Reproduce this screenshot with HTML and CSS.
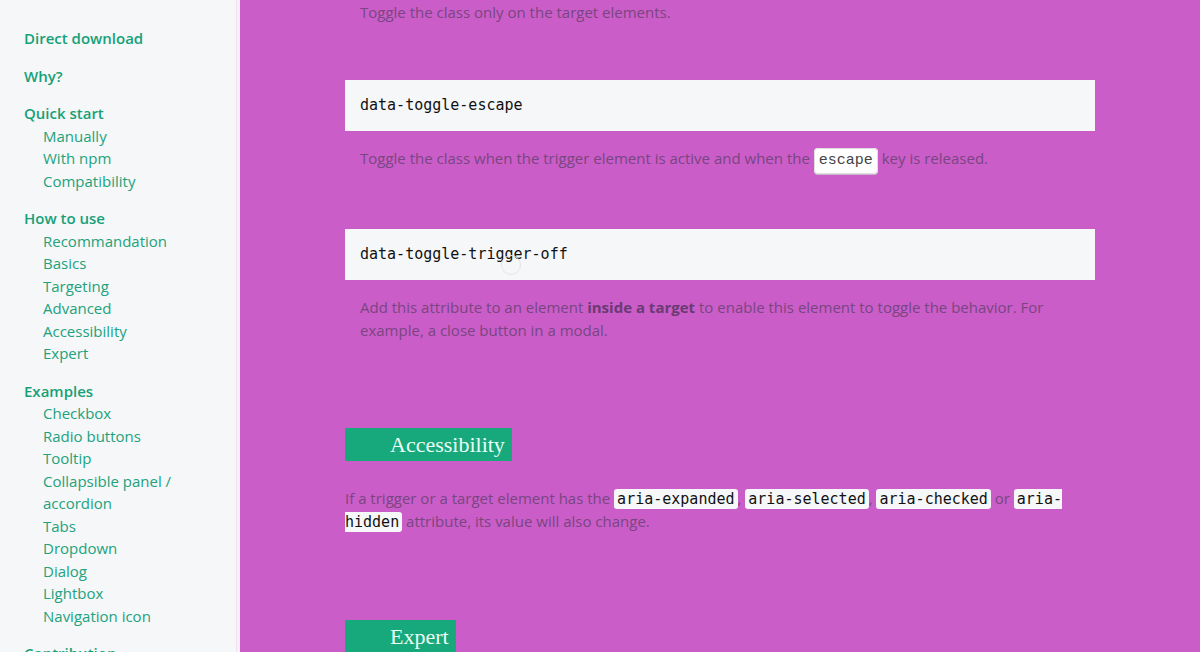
FILE: index.html
```html
<!DOCTYPE html>
<html lang="en">
<head>
<meta charset="utf-8">
<title>toggle docs</title>
<link rel="stylesheet" href="styles.css">
</head>
<body>
<div class="page">
  <aside class="sidebar">
    <nav class="nav">
      <div class="group"><a class="group-title">Direct download</a></div>
      <div class="group"><a class="group-title">Why?</a></div>
      <div class="group">
        <a class="group-title">Quick start</a>
        <ul class="sub">
          <li>Manually</li>
          <li>With npm</li>
          <li>Compatibility</li>
        </ul>
      </div>
      <div class="group">
        <a class="group-title">How to use</a>
        <ul class="sub">
          <li>Recommandation</li>
          <li>Basics</li>
          <li>Targeting</li>
          <li>Advanced</li>
          <li>Accessibility</li>
          <li>Expert</li>
        </ul>
      </div>
      <div class="group">
        <a class="group-title">Examples</a>
        <ul class="sub">
          <li>Checkbox</li>
          <li>Radio buttons</li>
          <li>Tooltip</li>
          <li>Collapsible panel / accordion</li>
          <li>Tabs</li>
          <li>Dropdown</li>
          <li>Dialog</li>
          <li>Lightbox</li>
          <li>Navigation icon</li>
        </ul>
      </div>
      <div class="group"><a class="group-title">Contribution</a></div>
    </nav>
  </aside>
  <main class="main">
    <div class="content">
      <p class="desc first">Toggle the class only on the target elements.</p>

      <div class="attr attr-1">data-toggle-escape</div>
      <p class="desc">Toggle the class when the trigger element is active and when the <kbd class="key">escape</kbd> key is released.</p>

      <div class="attr attr-2">data-toggle-trigger-off<span class="cursor"></span></div>
      <p class="desc">Add this attribute to an element <strong>inside a target</strong> to enable this element to toggle the behavior. For example, a close button in a modal.</p>

      <h2 class="section-title">Accessibility</h2>
      <p class="text">If a trigger or a target element has the <code>aria-expanded</code>, <code>aria-selected</code>, <code>aria-checked</code> or <code>aria-hidden</code> attribute, its value will also change.</p>

      <h2 class="section-title">Expert</h2>
    </div>
  </main>
</div>
</body>
</html>
```

FILE: styles.css
```css
* { box-sizing: border-box; }
html, body {
  margin: 0;
  padding: 0;
  height: 100%;
  overflow: hidden;
}
body {
  font-family: "Open Sans", "Liberation Sans", sans-serif;
  background: #cb5dc9;
}
.page {
  display: flex;
  height: 652px;
  overflow: hidden;
}
.sidebar {
  width: 240px;
  flex: 0 0 240px;
  background: #f5f7f9;
  border-right: 3px solid #fbeefb;
  box-shadow: inset -1px 0 0 #efe3ef;
  padding: 27px 24px 0 24px;
  overflow: hidden;
}
.nav { display: flex; flex-direction: column; gap: 15px; }
.group-title {
  display: block;
  font-size: 15px;
  font-weight: 600;
  line-height: 22.5px;
  color: #15a177;
}
.sub {
  list-style: none;
  margin: 0;
  padding: 0 0 0 19px;
}
.sub li {
  font-size: 15px;
  line-height: 22.5px;
  color: #22a27c;
}
.main {
  flex: 1;
  position: relative;
  overflow: hidden;
}
.content {
  width: 750px;
  margin: 0 auto;
  padding-top: 1px;
}
.desc, .text {
  margin: 0;
  font-size: 15px;
  line-height: 22.5px;
  color: #784680;
}
.desc { padding: 0 15px; margin-top: 16px; }
.desc.first { margin-top: 0; }
.desc strong { font-weight: 700; color: #6a3a72; }
.attr {
  position: relative;
  background: #f5f7f9;
  padding: 14px 15px;
  font-family: "DejaVu Sans Mono", "Liberation Mono", monospace;
  font-size: 15px;
  line-height: 23px;
  color: #111;
}
.attr-1 { margin-top: 56.5px; }
.attr-2 { margin-top: 56.5px; }
.key {
  font-family: "Liberation Mono", "Courier New", monospace;
  font-size: 15px;
  color: #444;
  background: #fff;
  border: 1px solid #e2dde2;
  border-radius: 4px;
  padding: 3px 4px 4px;
  box-shadow: 0 1px 0 #c9b6c9;
}
.section-title {
  display: inline-block;
  margin: 86.5px 0 0 0;
  background: #17a87b;
  color: #eafff6;
  font-family: "Liberation Serif", "Times New Roman", serif;
  font-weight: 400;
  font-size: 22px;
  line-height: 33px;
  height: 33px;
  padding: 0 7px 0 45px;
}
.text { margin-top: 26px; }
.text code {
  font-family: "DejaVu Sans Mono", "Liberation Mono", monospace;
  font-size: 15px;
  color: #111;
  background: #f5f7f9;
  border-radius: 3px;
  padding: 1px 3px;
}
.cursor {
  position: absolute;
  left: 156px;
  top: 26px;
  width: 20px;
  height: 20px;
  border-radius: 50%;
  border: 1.5px solid #e3e5e8;
}
```
